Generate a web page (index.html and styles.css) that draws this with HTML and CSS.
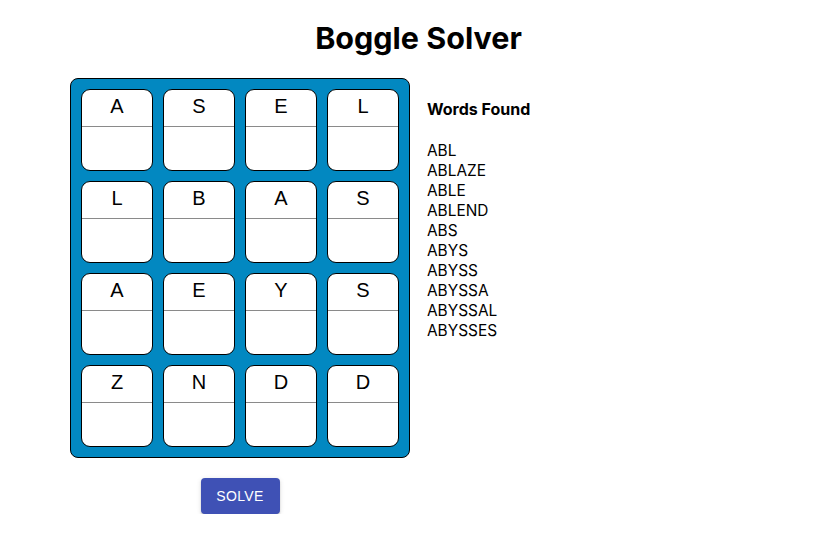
FILE: index.html
```html
<!DOCTYPE html>
<html>
<head>
<meta charset="utf-8">
<link rel="stylesheet" href="styles.css">
</head>
<body>
<h1 class="title">Boggle Solver</h1>
<div class="main">
  <div class="left">
    <div class="board">
      <div class="cell"><div class="letter">A</div><div class="extra"></div></div>
      <div class="cell"><div class="letter">S</div><div class="extra"></div></div>
      <div class="cell"><div class="letter">E</div><div class="extra"></div></div>
      <div class="cell"><div class="letter">L</div><div class="extra"></div></div>
      <div class="cell"><div class="letter">L</div><div class="extra"></div></div>
      <div class="cell"><div class="letter">B</div><div class="extra"></div></div>
      <div class="cell"><div class="letter">A</div><div class="extra"></div></div>
      <div class="cell"><div class="letter">S</div><div class="extra"></div></div>
      <div class="cell"><div class="letter">A</div><div class="extra"></div></div>
      <div class="cell"><div class="letter">E</div><div class="extra"></div></div>
      <div class="cell"><div class="letter">Y</div><div class="extra"></div></div>
      <div class="cell"><div class="letter">S</div><div class="extra"></div></div>
      <div class="cell"><div class="letter">Z</div><div class="extra"></div></div>
      <div class="cell"><div class="letter">N</div><div class="extra"></div></div>
      <div class="cell"><div class="letter">D</div><div class="extra"></div></div>
      <div class="cell"><div class="letter">D</div><div class="extra"></div></div>
    </div>
    <button class="solve">SOLVE</button>
  </div>
  <div class="words">
    <h2 class="words-title">Words Found</h2>
    <ul class="word-list">
      <li>ABL</li>
      <li>ABLAZE</li>
      <li>ABLE</li>
      <li>ABLEND</li>
      <li>ABS</li>
      <li>ABYS</li>
      <li>ABYSS</li>
      <li>ABYSSA</li>
      <li>ABYSSAL</li>
      <li>ABYSSES</li>
    </ul>
  </div>
</div>
</body>
</html>
```

FILE: styles.css
```css
html, body {
  margin: 0;
  padding: 0;
  background: #fff;
  color: #000;
  font-family: Inter, "Liberation Sans", sans-serif;
}
.title {
  margin: 0;
  padding-top: 19px;
  text-align: center;
  font-size: 30.5px;
  font-weight: 700;
  line-height: 38px;
}
.main {
  display: flex;
  justify-content: center;
  gap: 17px;
  margin-top: 21px;
}
.left {
  width: 340px;
  display: flex;
  flex-direction: column;
  align-items: center;
}
.board {
  box-sizing: border-box;
  width: 340px;
  height: 380px;
  background: #0288c1;
  border: 1px solid #000;
  border-radius: 8px;
  padding: 10px;
  display: grid;
  grid-template-columns: repeat(4, 72px);
  grid-template-rows: repeat(4, 82px);
  gap: 10px;
}
.cell {
  box-sizing: border-box;
  background: #fff;
  border: 1px solid #000;
  border-radius: 9px;
  display: flex;
  flex-direction: column;
  overflow: hidden;
}
.letter {
  height: 37px;
  border-bottom: 1px solid #8a8a8a;
  display: flex;
  justify-content: center;
  align-items: center;
  font-family: "Liberation Sans", Arial, sans-serif;
  font-size: 20px;
  padding-bottom: 3px;
  box-sizing: border-box;
}
.extra {
  flex: 1;
}
.solve {
  margin-top: 20px;
  width: 79px;
  height: 36px;
  background: #3f51b5;
  color: #fff;
  border: none;
  border-radius: 4px;
  font-family: "Liberation Sans", Arial, sans-serif;
  font-size: 14px;
  font-weight: 400;
  letter-spacing: 0.4px;
  box-shadow: 0 3px 1px -2px rgba(0,0,0,0.2), 0 2px 2px 0 rgba(0,0,0,0.14), 0 1px 5px 0 rgba(0,0,0,0.12);
  cursor: pointer;
}
.words {
  width: 340px;
}
.words-title {
  margin: 21px 0 0;
  font-size: 16px;
  font-weight: 700;
  line-height: 20px;
}
.word-list {
  list-style: none;
  margin: 22px 0 0;
  padding: 0;
  font-size: 15.4px;
  line-height: 20px;
}
```
